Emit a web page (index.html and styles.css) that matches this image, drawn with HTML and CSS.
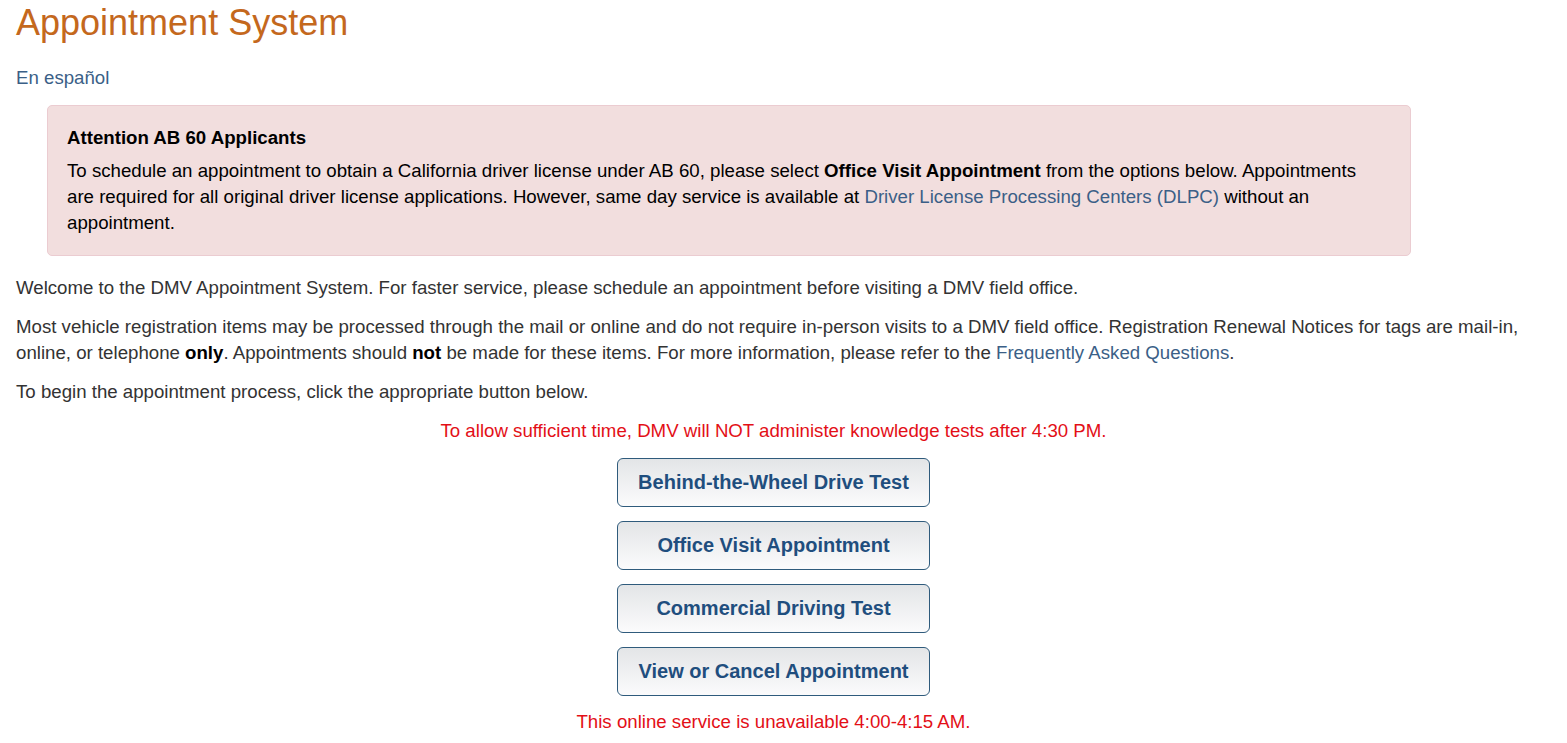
FILE: index.html
```html
<!DOCTYPE html>
<html lang="en">
<head>
<meta charset="utf-8">
<title>Appointment System</title>
<link rel="stylesheet" href="styles.css">
</head>
<body>
<div class="page">
  <h1 class="title">Appointment System</h1>
  <p class="lang"><a href="#">En español</a></p>
  <div class="alert">
    <h4 class="alert-title">Attention AB 60 Applicants</h4>
    <p class="alert-text">To schedule an appointment to obtain a California driver license under AB 60, please select <b>Office Visit Appointment</b> from the options below. Appointments are required for all original driver license applications. However, same day service is available at <a href="#">Driver License Processing Centers (DLPC)</a> without an appointment.</p>
  </div>
  <p>Welcome to the DMV Appointment System. For faster service, please schedule an appointment before visiting a DMV field office.</p>
  <p>Most vehicle registration items may be processed through the mail or online and do not require in-person visits to a DMV field office. Registration Renewal Notices for tags are mail-in, online, or telephone <b>only</b>. Appointments should <b>not</b> be made for these items. For more information, please refer to the <a href="#">Frequently Asked Questions</a>.</p>
  <p>To begin the appointment process, click the appropriate button below.</p>
  <div class="actions">
    <p class="warn">To allow sufficient time, DMV will NOT administer knowledge tests after 4:30 PM.</p>
    <button class="btn" type="button">Behind-the-Wheel Drive Test</button>
    <button class="btn" type="button">Office Visit Appointment</button>
    <button class="btn" type="button">Commercial Driving Test</button>
    <button class="btn" type="button">View or Cancel Appointment</button>
    <p class="warn">This online service is unavailable 4:00-4:15 AM.</p>
  </div>
</div>
</body>
</html>
```

FILE: styles.css
```css
html, body {
  margin: 0;
  padding: 0;
  background: #fff;
}
body {
  font-family: "Liberation Sans", Arial, sans-serif;
  font-size: 18.67px;
  line-height: 26px;
  color: #333;
}
.page {
  padding: 0 36px 0 16px;
}
a {
  color: #3b5f87;
  text-decoration: none;
}
p {
  margin: 0 0 13px;
}
b {
  font-weight: bold;
  color: #000;
}
.title {
  margin: 0;
  padding-top: 3px;
  font-size: 36px;
  line-height: 40px;
  font-weight: normal;
  color: #c4681d;
}
.lang {
  margin: 22px 0 14px;
}
.alert {
  box-sizing: border-box;
  margin: 0 0 19px 31px;
  width: 1364px;
  padding: 19px 30px 19px 19px;
  background: #f2dede;
  border: 1px solid #ebccd1;
  border-radius: 5px;
  color: #000;
}
.alert-title {
  margin: 0 0 7px;
  font-size: 18.67px;
  line-height: 26px;
  font-weight: bold;
}
.alert-text {
  margin: 0;
}
.actions {
  display: flex;
  flex-direction: column;
  align-items: center;
}
.warn {
  color: #e30f17;
  margin: 0 0 14px;
}
.actions .warn:last-child {
  margin-top: -1px;
}
.btn {
  width: 313px;
  height: 49px;
  margin: 0 0 14px;
  padding: 0;
  font-family: "Liberation Sans", Arial, sans-serif;
  font-size: 20px;
  font-weight: bold;
  color: #1f4e7e;
  background: linear-gradient(to bottom, #e3e5e7, #fbfbfc);
  border: 1px solid #2f5b7c;
  border-radius: 6px;
}
```
